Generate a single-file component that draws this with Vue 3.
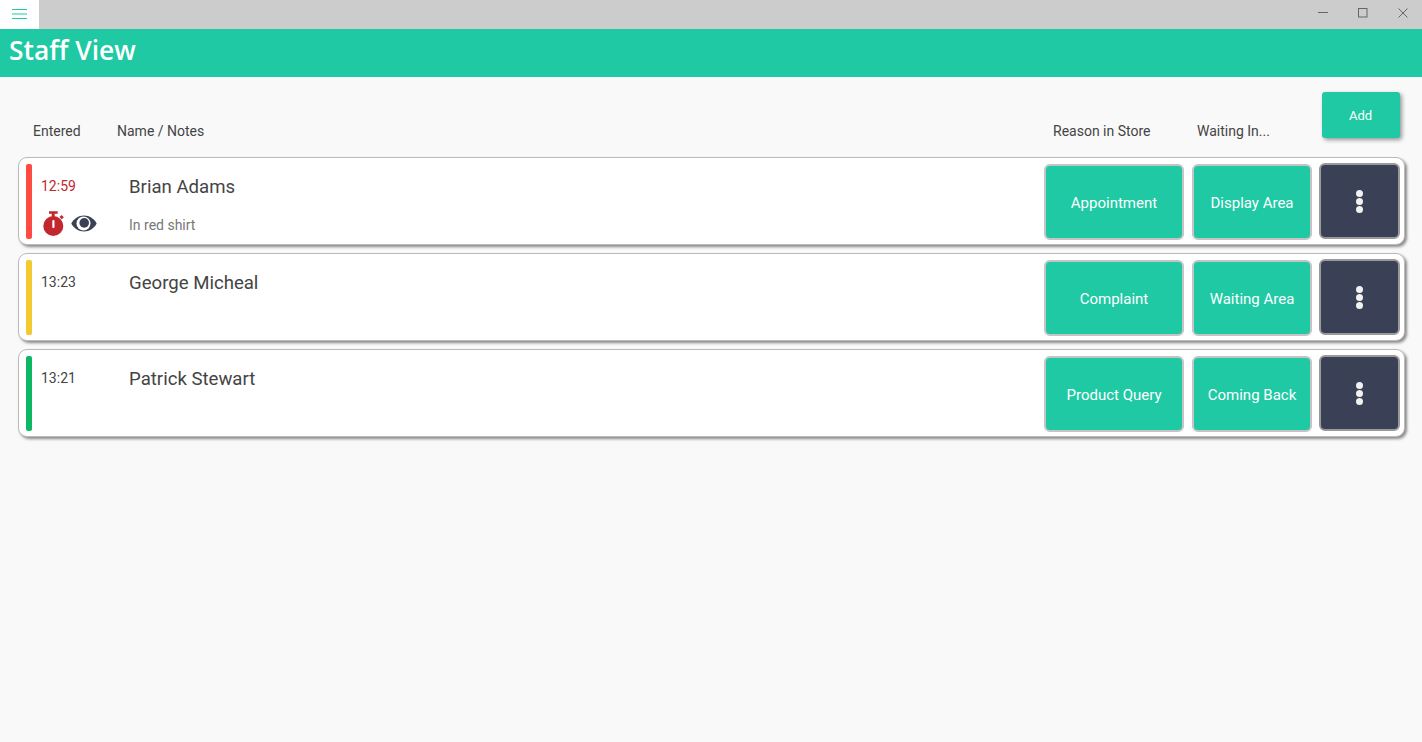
<script setup>
const visitors = [
  { id: 1, time: '12:59', name: 'Brian Adams', notes: 'In red shirt', reason: 'Appointment', waiting: 'Display Area', color: '#ff4b42', late: true },
  { id: 2, time: '13:23', name: 'George Micheal', notes: '', reason: 'Complaint', waiting: 'Waiting Area', color: '#f4c92f', late: false },
  { id: 3, time: '13:21', name: 'Patrick Stewart', notes: '', reason: 'Product Query', waiting: 'Coming Back', color: '#0cb863', late: false },
];
</script>

<template>
  <div class="app">
    <div class="titlebar">
      <div class="menu-btn">
        <svg width="15" height="11" viewBox="0 0 15 11">
          <path d="M0 0.5h15M0 5h15M0 9.5h15" stroke="#1ec9a4" stroke-width="1" fill="none" />
        </svg>
      </div>
      <div class="win-controls">
        <svg width="10" height="10" viewBox="0 0 10 10"><path d="M0 4.5h10" stroke="#666" fill="none" /></svg>
        <svg width="10" height="10" viewBox="0 0 10 10"><rect x="0.5" y="0.5" width="8.500" height="8.500" stroke="#666" fill="none" /></svg>
        <svg width="10" height="10" viewBox="0 0 10 10"><path d="M0.500 0.500l9 9M9.500 0.500l-9 9" stroke="#666" fill="none" /></svg>
      </div>
    </div>

    <header class="header">Staff View</header>

    <main class="content">
      <div class="columns">
        <span class="col-entered">Entered</span>
        <span class="col-name">Name / Notes</span>
        <span class="col-reason">Reason in Store</span>
        <span class="col-waiting">Waiting In...</span>
        <button class="add-btn">Add</button>
      </div>

      <div class="list">
        <div v-for="v in visitors" :key="v.id" class="card">
          <div class="stripe" :style="{ backgroundColor: v.color }"></div>
          <div class="entered">
            <div class="time" :class="{ late: v.late }">{{ v.time }}</div>
            <div v-if="v.late" class="status-icons">
              <svg width="22" height="27" viewBox="0 0 22 27">
                <path d="M6 1.300h8.700v2.500h-3v3h-3v-3H6z" fill="#c1272d" />
                <path d="M16.500 7l2-2 2.300 2.300-2 2z" fill="#c1272d" />
                <circle cx="10.300" cy="16" r="10" fill="#c1272d" />
                <rect x="9.300" y="10" width="2.200" height="8" rx="1" fill="#fff" />
              </svg>
              <svg width="26" height="17" viewBox="0 0 26 17">
                <path d="M13 0.500C7.500 0.500 2.800 3.800 0.300 8.500c2.500 4.700 7.200 8 12.700 8s10.200-3.300 12.700-8C23.200 3.800 18.500 0.500 13 0.500z" fill="#3a4056" />
                <circle cx="12.500" cy="8.500" r="7" fill="#fff" />
                <circle cx="13.200" cy="7.900" r="4.800" fill="#3a4056" />
              </svg>
            </div>
          </div>
          <div class="info">
            <div class="name">{{ v.name }}</div>
            <div v-if="v.notes" class="notes">{{ v.notes }}</div>
          </div>
          <button class="tile reason">{{ v.reason }}</button>
          <button class="tile waiting">{{ v.waiting }}</button>
          <button class="more">
            <span></span><span></span><span></span>
          </button>
        </div>
      </div>
    </main>
  </div>
</template>

<style>
html, body { margin: 0; background: #f9f9f9; }
</style>

<style scoped>
.app { height: 742px; overflow: hidden; background: #f9f9f9; font-family: Roboto, "Liberation Sans", sans-serif; color: #444; }
.titlebar { height: 29px; background: #cccccc; display: flex; justify-content: space-between; }
.menu-btn { width: 39px; background: #fff; display: flex; align-items: center; justify-content: center; }
.win-controls { display: flex; align-items: flex-start; gap: 30px; padding: 8px 14px 0 0; }
.win-controls svg { display: block; }
.header { height: 48px; background: #1ec9a4; color: #fff; font-family: "Open Sans", "Noto Sans", sans-serif; font-weight: 600; font-size: 26.4px; line-height: 43px; padding-left: 9px; }
.content { padding: 15px 17px 0 18px; }
.columns { height: 65px; display: flex; font-size: 14px; }
.columns span { padding-top: 30px; line-height: 18px; }
.col-entered { width: 84px; margin-left: 15px; }
.col-name { width: 936px; }
.col-reason { width: 144px; }
.col-waiting { flex: 1; }
.add-btn { width: 78px; height: 46px; margin-right: 5px; padding: 0 1px 0 0; background: #1ec9a4; color: #fff; border: none; border-radius: 3px; font-family: inherit; font-size: 13px; box-shadow: 2px 2px 4px rgba(0,0,0,0.4); }
.list { display: flex; flex-direction: column; gap: 8px; }
.card { box-sizing: border-box; height: 88px; background: #fff; border: 1px solid #bbbbbb; border-radius: 9px; box-shadow: 2px 2px 3px rgba(0,0,0,0.45); display: flex; align-items: flex-start; padding: 6px 4px 0 7px; }
.stripe { width: 6px; height: 75px; border-radius: 2px; flex-shrink: 0; }
.entered { box-sizing: border-box; width: 97px; padding-left: 9px; flex-shrink: 0; }
.time { font-size: 14px; line-height: 18px; margin-top: 13px; color: #444; }
.time.late { color: #c1272d; }
.status-icons { display: flex; align-items: center; gap: 6px; margin-top: 15px; margin-left: 2px; }
.status-icons svg { display: block; }
.info { flex: 1; }
.name { font-size: 18.6px; line-height: 24px; margin-top: 11px; color: #444; }
.notes { font-size: 14px; line-height: 18px; margin-top: 17px; color: #777; }
.tile { box-sizing: border-box; height: 76px; background: #1ec9a4; color: #fff; border: 2px solid #c4c4c4; border-radius: 6px; font-family: inherit; font-size: 15px; padding: 2px 0 0; }
.reason { width: 140px; margin-right: 8px; }
.waiting { width: 120px; margin-right: 7px; }
.more { box-sizing: border-box; width: 81px; height: 76px; margin-top: -1px; background: #3a4056; border: 2px solid #9a9a9a; border-radius: 6px; display: flex; flex-direction: column; align-items: center; justify-content: center; gap: 1px; padding: 0; }
.more span { width: 7px; height: 7px; border-radius: 50%; background: #f2f2f2; }
</style>
